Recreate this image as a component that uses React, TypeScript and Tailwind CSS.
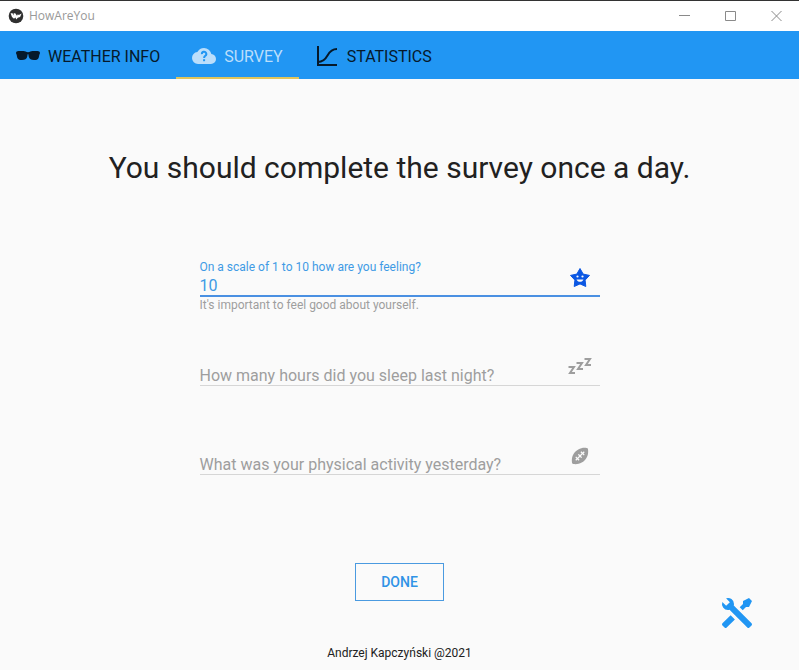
import { useState } from "react";
import type { ReactNode } from "react";

function AppLogo() {
  return (
    <svg viewBox="0 0 16 16" className="size-4" aria-hidden="true">
      <circle cx="8" cy="8" r="7.3" fill="#303030" />
      <path d="M2.600 5.200h1.900L6 7.600 5.600 5.200h1.600L9 7.800l.8-1.600 1 .8 2.800-1.400-1.500 3.400-2.300.8-1.500 1.600-.9-1.900-1.400 1.300L4 9z" fill="#fff" />
    </svg>
  );
}

function SunglassesIcon() {
  return (
    <svg viewBox="0 0 24 24" className="size-6" fill="currentColor" aria-hidden="true">
      <path d="M2.500 7C1 7 0 7.900 0 9c0 .7.500 1.100.700 1.800.2 1 .2 2.100.7 3.100C2.200 15.500 3.800 16 6 16c3 0 4.500-1.200 5.200-3.300.2-.7.300-2.700.8-2.700s.6 2 .8 2.700C13.500 14.800 15 16 18 16c2.200 0 3.800-.5 4.600-2.100.5-1 .5-2.100.7-3.100.2-.7.700-1.100.7-1.800 0-1.100-1-2-2.500-2h-5c-1.800 0-2.500 1.200-4.500 1.200S9.300 7 7.500 7z" />
    </svg>
  );
}

function CloudQuestionIcon() {
  return (
    <svg viewBox="0 0 24 24" className="size-6" aria-hidden="true">
      <path
        fill="currentColor"
        d="M19.35 10.04A7.49 7.49 0 0 0 12 4C9.11 4 6.6 5.64 5.35 8.04A5.994 5.994 0 0 0 0 14a6 6 0 0 0 6 6h13a5 5 0 0 0 5-5c0-2.640-2.050-4.780-4.650-4.960Z"
      />
      <path d="M9.900 10.200a2.200 2.200 0 1 1 3.500 1.500c-.8.600-1.300.9-1.300 2.300" fill="none" stroke="#2196f3" strokeWidth="2" />
      <path d="M11.100 15.200h2v2h-2z" fill="#2196f3" />
    </svg>
  );
}

function CurveChartIcon() {
  return (
    <svg viewBox="0 0 24 24" className="size-6" fill="none" stroke="currentColor" strokeWidth="2" aria-hidden="true">
      <path d="M3 2v19h19" />
      <path d="M3 18c4.500 0 7-2 9.500-6.500S17.500 5 22 5" />
    </svg>
  );
}

function StarFaceIcon() {
  return (
    <svg viewBox="0 0 24 24" className="size-6" aria-hidden="true">
      <path
        fill="currentColor"
        stroke="currentColor"
        strokeWidth="1"
        strokeLinejoin="round"
        d="m12 2.500 3.200 5.600 6.300 1.300-4.400 4.700.7 6.400L12 17.900l-5.800 2.600.7-6.400L2.500 9.400l6.300-1.300Z"
      />
      <g fill="#fafafa">
        <circle cx="9.500" cy="10.500" r="1.100" />
        <circle cx="14.500" cy="10.500" r="1.100" />
        <path d="M8.500 13.500h7c-.7 1.600-1.900 2.300-3.500 2.300s-2.800-.7-3.500-2.300Z" />
      </g>
    </svg>
  );
}

function SleepIcon() {
  return (
    <svg viewBox="0 0 24 24" className="size-6" fill="none" stroke="currentColor" strokeWidth="2" aria-hidden="true">
      <path d="M.500 12H6L2 18h5M8.500 8H14l-4 6h5M16.500 4H22l-4 6h5" />
    </svg>
  );
}

function FootballIcon() {
  return (
    <svg viewBox="0 0 24 24" className="size-6" fill="currentColor" aria-hidden="true">
      <path d="M7.5 7.5C9.17 5.87 11.29 4.69 13.37 4.18C15.46 3.67 17.5 3.83 18.6 4C19.71 4.15 19.87 4.31 20.03 5.41C20.18 6.5 20.33 8.55 19.82 10.63C19.31 12.71 18.13 14.83 16.5 16.5C14.83 18.13 12.71 19.31 10.63 19.82C8.55 20.33 6.5 20.18 5.41 20.03C4.31 19.87 4.15 19.71 4 18.6C3.83 17.5 3.67 15.46 4.18 13.37C4.69 11.29 5.87 9.17 7.5 7.5M7.3 15.79L8.21 16.7L9.42 15.5L10.63 16.7L11.54 15.79L10.34 14.58L12 12.91L13.21 14.12L14.12 13.21L12.91 12L14.58 10.34L15.79 11.54L16.7 10.63L15.5 9.42L16.7 8.21L15.79 7.3L14.58 8.5L13.37 7.3L12.46 8.21L13.66 9.42L12 11.09L10.79 9.88L9.88 10.79L11.09 12L9.42 13.66L8.21 12.46L7.3 13.37L8.5 14.58L7.3 15.79Z" />
    </svg>
  );
}

function ToolsIcon() {
  return (
    <svg viewBox="0 0 24 24" className="size-9" fill="currentColor" aria-hidden="true">
      <path d="M21.71 20.29L20.29 21.71A1 1 0 0 1 18.88 21.71L7 9.85A3.81 3.81 0 0 1 6 10A4 4 0 0 1 2.22 4.7L4.76 7.24L5.29 6.71L6.71 5.29L7.24 4.76L4.7 2.22A4 4 0 0 1 10 6A3.81 3.81 0 0 1 9.85 7L21.71 18.88A1 1 0 0 1 21.71 20.29M2.29 18.88A1 1 0 0 0 2.29 20.29L3.71 21.71A1 1 0 0 0 5.12 21.71L10.59 16.25L7.76 13.42M20 2L16 4V6L13.83 8.17L15.83 10.17L18 8H20L22 4Z" />
    </svg>
  );
}

function WindowButton({ label, path }: { label: string; path: string }) {
  return (
    <button type="button" aria-label={label} className="flex w-[46px] items-center justify-center text-[#8a8a8a]">
      <svg viewBox="0 0 11 11" className="size-[11px]" fill="none" stroke="currentColor" aria-hidden="true">
        <path d={path} />
      </svg>
    </button>
  );
}

function TitleBar() {
  return (
    <header className="flex h-[31px] justify-between border-t border-[#333] bg-white">
      <div className="flex items-center gap-[5px] pl-2 font-['Open_Sans',sans-serif] text-xs text-[#999]">
        <AppLogo />
        HowAreYou
      </div>
      <div className="flex">
        <WindowButton label="Minimize" path="M0 4.5h11" />
        <WindowButton label="Maximize" path="M.5.5h10v9H.5z" />
        <WindowButton label="Close" path="m.5 0 10 10m0-10-10 10" />
      </div>
    </header>
  );
}

function Tab({ icon, text, active }: { icon: ReactNode; text: string; active?: boolean }) {
  return (
    <button
      type="button"
      role="tab"
      aria-selected={!!active}
      className={
        active
          ? "flex items-center gap-2 border-b-2 border-[#e0c55c] px-4 pt-1 text-[#bbdefb]"
          : "flex items-center gap-2 border-b-2 border-transparent px-4 pt-1 text-[#06192a]"
      }
    >
      {icon}
      <span className="pt-px">{text}</span>
    </button>
  );
}

type FieldProps = { id: string; label: string; icon: ReactNode; initial?: string; helper?: string };

function Field({ id, label, icon, initial = "", helper }: FieldProps) {
  const [value, setValue] = useState(initial);
  const filled = value !== "";
  return (
    <div className="relative h-[89px]">
      <label
        htmlFor={id}
        className={
          filled
            ? "absolute left-0 top-0 text-xs leading-4 text-[#3f9ae5]"
            : "absolute bottom-[51px] left-0 text-base leading-5 text-[#9e9e9e]"
        }
      >
        {label}
      </label>
      <div
        className={
          filled
            ? "flex h-[38px] items-end border-b-2 border-[#4a90e2] pt-4"
            : "flex h-[38px] items-end border-b border-[#d6d6d6] pt-4"
        }
      >
        <input
          id={id}
          value={value}
          onChange={(e) => setValue(e.target.value)}
          className="h-5 min-w-0 flex-1 bg-transparent pt-px text-base leading-5 text-[#3f9ae5] outline-none"
        />
      </div>
      <span className="pointer-events-none absolute right-2 top-[7px]">
        <span className={filled ? "text-[#0b57e3]" : "text-[#9e9e9e]"}>{icon}</span>
      </span>
      {helper && <p className="text-xs leading-4 text-[#9e9e9e]">{helper}</p>}
    </div>
  );
}

export default function App() {
  return (
    <div className="flex min-h-screen flex-col bg-[#fafafa] font-[Roboto,sans-serif] text-[#212121]">
      <TitleBar />
      <nav role="tablist" className="flex h-12 bg-[#2196f3] text-base">
        <Tab icon={<SunglassesIcon />} text="WEATHER INFO" />
        <Tab icon={<CloudQuestionIcon />} text="SURVEY" active />
        <Tab icon={<CurveChartIcon />} text="STATISTICS" />
      </nav>
      <main className="relative flex flex-1 flex-col items-center px-4 pt-[69px]">
        <h1 className="text-center text-[30px] leading-10">You should complete the survey once a day.</h1>
        <form className="flex w-full flex-col items-center pt-[71px]" onSubmit={(e) => e.preventDefault()}>
          <div className="w-full max-w-[400px]">
            <Field
              id="feeling"
              label="On a scale of 1 to 10 how are you feeling?"
              icon={<StarFaceIcon />}
              initial="10"
              helper="It's important to feel good about yourself."
            />
            <Field id="sleep" label="How many hours did you sleep last night?" icon={<SleepIcon />} />
            <Field id="activity" label="What was your physical activity yesterday?" icon={<FootballIcon />} />
          </div>
          <button
            type="submit"
            className="mt-[37px] h-[38px] border border-[#4a9ae0] px-[25px] text-sm font-medium text-[#2f93e6]"
          >
            DONE
          </button>
        </form>
        <footer className="mt-auto pb-[9px] text-xs leading-4">Andrzej Kapczyński @2021</footer>
        <button type="button" aria-label="Settings" className="absolute bottom-[39px] right-11 text-[#2196f3]">
          <ToolsIcon />
        </button>
      </main>
    </div>
  );
}
